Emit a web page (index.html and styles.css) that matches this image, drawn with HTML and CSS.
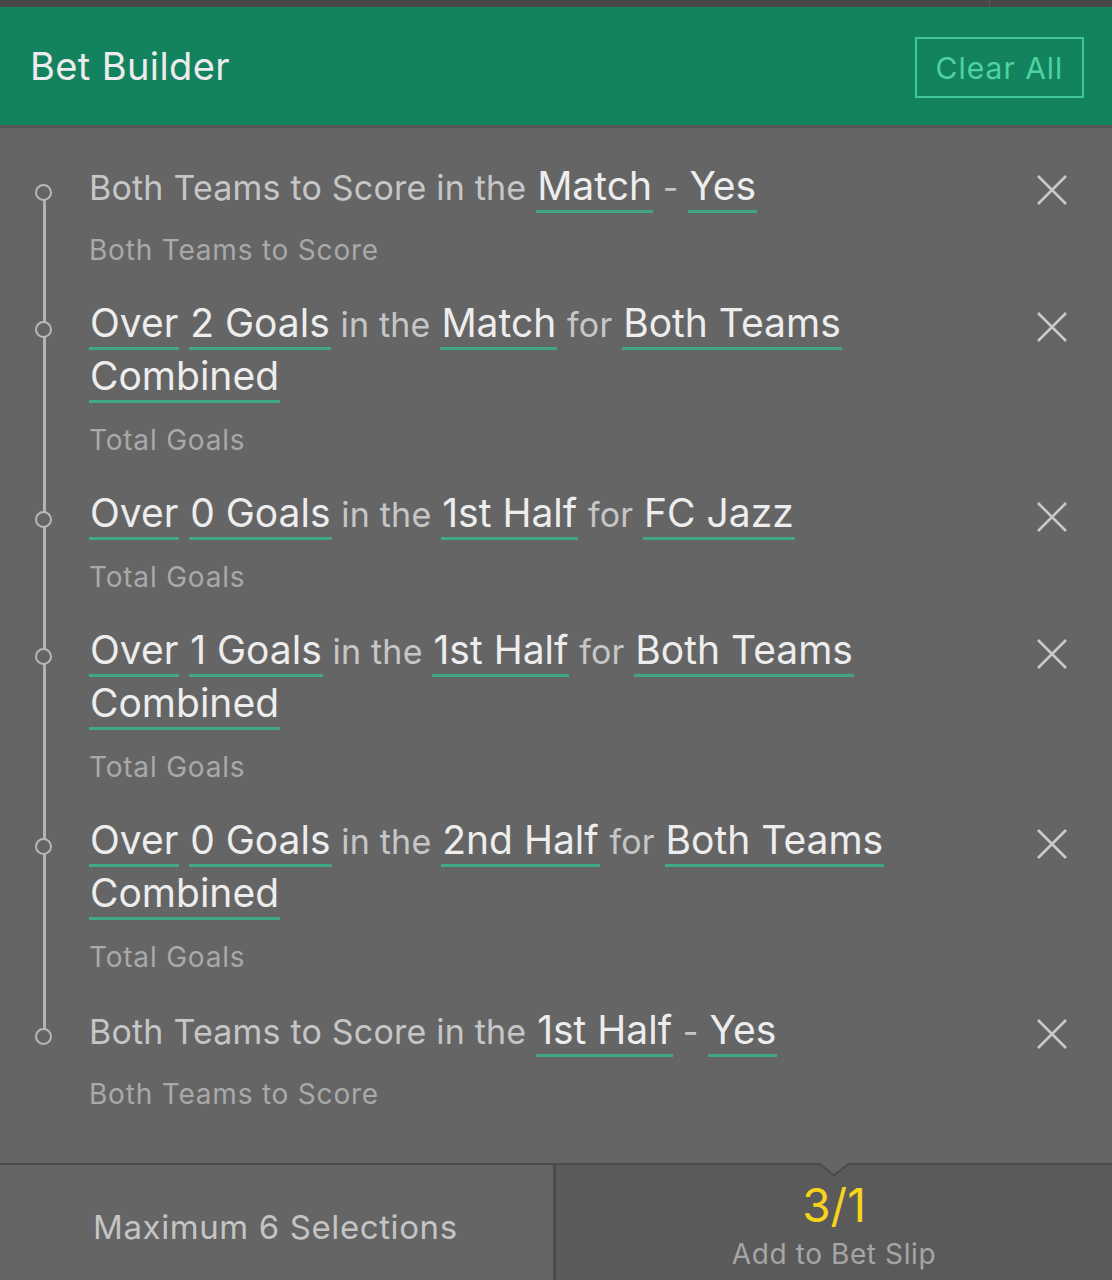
FILE: index.html
```html
<!DOCTYPE html>
<html lang="en">
<head>
    <meta charset="UTF-8">
    <meta name="viewport" content="width=device-width, initial-scale=1.0">
    <title>Bet Builder</title>
    <link rel="stylesheet" href="styles.css">
</head>
<body>
    <div class="top-strip">
        <div class="top-strip-left"></div>
    </div>
    <div class="header">
        <h1>Bet Builder</h1>
        <button class="clear-btn">Clear All</button>
    </div>

    <div class="selections">
        <div class="selection">
            <div class="node"></div>
            <div class="selection-body">
                <div class="selection-text">Both Teams to Score in the <span class="pick">Match</span> - <span class="pick">Yes</span></div>
                <div class="market">Both Teams to Score</div>
            </div>
            <button class="remove"><svg viewBox="0 0 32 32" width="32" height="32"><path d="M2 2 L30 30 M30 2 L2 30"/></svg></button>
        </div>
        <div class="selection">
            <div class="node"></div>
            <div class="selection-body">
                <div class="selection-text"><span class="pick">Over</span> <span class="pick">2 Goals</span> in the <span class="pick">Match</span> for <span class="pick">Both Teams Combined</span></div>
                <div class="market">Total Goals</div>
            </div>
            <button class="remove"><svg viewBox="0 0 32 32" width="32" height="32"><path d="M2 2 L30 30 M30 2 L2 30"/></svg></button>
        </div>
        <div class="selection">
            <div class="node"></div>
            <div class="selection-body">
                <div class="selection-text"><span class="pick">Over</span> <span class="pick">0 Goals</span> in the <span class="pick">1st Half</span> for <span class="pick">FC Jazz</span></div>
                <div class="market">Total Goals</div>
            </div>
            <button class="remove"><svg viewBox="0 0 32 32" width="32" height="32"><path d="M2 2 L30 30 M30 2 L2 30"/></svg></button>
        </div>
        <div class="selection">
            <div class="node"></div>
            <div class="selection-body">
                <div class="selection-text"><span class="pick">Over</span> <span class="pick">1 Goals</span> in the <span class="pick">1st Half</span> for <span class="pick">Both Teams Combined</span></div>
                <div class="market">Total Goals</div>
            </div>
            <button class="remove"><svg viewBox="0 0 32 32" width="32" height="32"><path d="M2 2 L30 30 M30 2 L2 30"/></svg></button>
        </div>
        <div class="selection">
            <div class="node"></div>
            <div class="selection-body">
                <div class="selection-text"><span class="pick">Over</span> <span class="pick">0 Goals</span> in the <span class="pick">2nd Half</span> for <span class="pick">Both Teams Combined</span></div>
                <div class="market">Total Goals</div>
            </div>
            <button class="remove"><svg viewBox="0 0 32 32" width="32" height="32"><path d="M2 2 L30 30 M30 2 L2 30"/></svg></button>
        </div>
        <div class="selection">
            <div class="node"></div>
            <div class="selection-body">
                <div class="selection-text">Both Teams to Score in the <span class="pick">1st Half</span> - <span class="pick">Yes</span></div>
                <div class="market">Both Teams to Score</div>
            </div>
            <button class="remove"><svg viewBox="0 0 32 32" width="32" height="32"><path d="M2 2 L30 30 M30 2 L2 30"/></svg></button>
        </div>
    </div>

    <div class="footer">
        <div class="max-info">Maximum 6 Selections</div>
        <div class="add-slip">
            <div class="odds">3/1</div>
            <div class="add-label">Add to Bet Slip</div>
        </div>
    </div>
</body>
</html>
```

FILE: styles.css
```css
/* Bet builder panel */
body {
    font-family: Inter, "Noto Sans", sans-serif;
    margin: 0;
    background-color: #656565;
    color: #c8c8c8;
}
.top-strip {
    height: 7px;
    background: #474747;
}
.top-strip-left {
    width: 989px;
    height: 100%;
    border-right: 1px solid #595959;
}
.header {
    height: 118px;
    display: flex;
    align-items: center;
    justify-content: space-between;
    padding: 0 28px 0 30px;
    background: #13825f;
    border-bottom: 3px solid #575757;
}
.header h1 {
    margin: 0;
    font-size: 38px;
    font-weight: 400;
    color: #ececec;
    letter-spacing: 0.4px;
}
.clear-btn {
    width: 169px;
    height: 61px;
    margin-top: 3px;
    background: transparent;
    border: 2px solid #3fc896;
    color: #4fd2a1;
    font-family: inherit;
    font-size: 30px;
    letter-spacing: 1px;
    padding: 0;
}

.selections {
    padding: 33px 0 21px;
}
.selection {
    position: relative;
    display: grid;
    grid-template-columns: 89px 911px 1fr;
    padding-bottom: 28px;
}
/* timeline segment to the next node */
.selection:not(:last-child)::before {
    content: "";
    position: absolute;
    left: 43px;
    top: 31px;
    bottom: -31px;
    width: 3px;
    background: #b3b3b3;
}
.node {
    position: relative;
    z-index: 1;
    width: 13px;
    height: 13px;
    margin: 23px 0 0 35px;
    border: 2.5px solid #b8b8b8;
    border-radius: 50%;
    background: #656565;
}
.selection-text {
    font-size: 34px;
    line-height: 53px;
    color: #c6c6c6;
    letter-spacing: 0.2px;
}
.pick {
    font-size: 39px;
    line-height: 39px;
    letter-spacing: 0;
    color: #ededed;
    padding: 0 1px 4px;
    background: linear-gradient(#3fa783, #3fa783) no-repeat left bottom / 100% 3px;
    -webkit-box-decoration-break: clone;
    box-decoration-break: clone;
}
.market {
    margin-top: 16px;
    font-size: 28px;
    line-height: 40px;
    color: #a9a9a9;
    letter-spacing: 0.8px;
}
.remove {
    justify-self: start;
    margin: 13px 0 0 36px;
    padding: 0;
    width: 32px;
    height: 32px;
    background: none;
    border: none;
}
.remove svg {
    display: block;
    stroke: #c9c9c9;
    stroke-width: 2.6;
    fill: none;
}

.footer {
    display: flex;
    height: 115px;
    border-top: 2px solid #4b4b4b;
}
.max-info {
    width: 460px;
    padding: 8px 0 0 93px;
    display: flex;
    align-items: center;
    font-size: 33px;
    color: #c4c4c4;
    border-right: 3px solid #4a4a4a;
    letter-spacing: 0.6px;
}
.add-slip {
    position: relative;
    flex: 1;
    background: #5a5a5a;
    display: flex;
    flex-direction: column;
    align-items: center;
    padding-top: 14px;
}
/* notch pointing into the footer */
.add-slip::before {
    content: "";
    position: absolute;
    top: -2px;
    left: 50%;
    margin-left: -17px;
    border-left: 17px solid transparent;
    border-right: 17px solid transparent;
    border-top: 14px solid #4b4b4b;
}
.add-slip::after {
    content: "";
    position: absolute;
    top: -2px;
    left: 50%;
    margin-left: -14px;
    border-left: 14px solid transparent;
    border-right: 14px solid transparent;
    border-top: 11px solid #656565;
}
.odds {
    font-size: 46px;
    line-height: 52px;
    color: #f7d31c;
}
.add-label {
    margin-top: 3px;
    font-size: 28px;
    line-height: 40px;
    color: #a6a6a6;
    letter-spacing: 0.6px;
}
```
